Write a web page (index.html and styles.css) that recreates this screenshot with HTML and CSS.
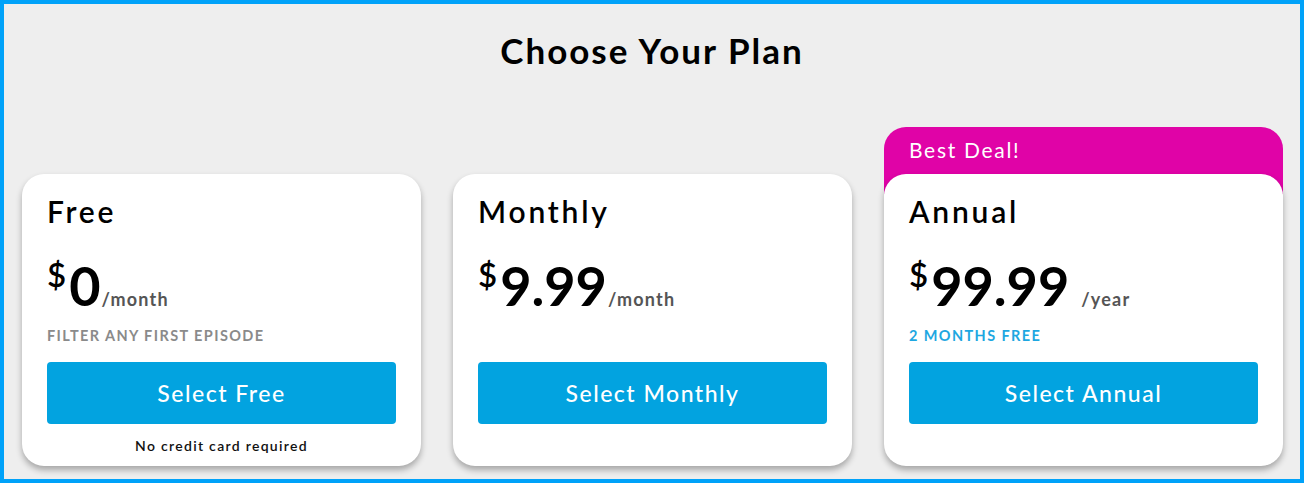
FILE: index.html
```html
<!DOCTYPE html>
<html lang="en">
<head>
<meta charset="utf-8">
<title>Choose Your Plan</title>
<link rel="stylesheet" href="styles.css">
</head>
<body>
<div class="frame">
  <h1 class="title">Choose Your Plan</h1>
  <div class="plans">
    <div class="plan">
      <div class="card">
        <h2 class="name">Free</h2>
        <div class="price"><span class="cur">$</span><span class="amt">0</span><span class="per">/month</span></div>
        <div class="sub">Filter any first episode</div>
        <button class="btn">Select Free</button>
        <div class="note">No credit card required</div>
      </div>
    </div>
    <div class="plan">
      <div class="card">
        <h2 class="name">Monthly</h2>
        <div class="price"><span class="cur">$</span><span class="amt">9.99</span><span class="per">/month</span></div>
        <div class="sub"></div>
        <button class="btn">Select Monthly</button>
        <div class="note"></div>
      </div>
    </div>
    <div class="plan">
      <div class="badge">Best Deal!</div>
      <div class="card">
        <h2 class="name">Annual</h2>
        <div class="price"><span class="cur">$</span><span class="amt">99.99</span><span class="per per-gap">/year</span></div>
        <div class="sub sub-blue">2 months free</div>
        <button class="btn">Select Annual</button>
        <div class="note"></div>
      </div>
    </div>
  </div>
</div>
</body>
</html>
```
FILE: styles.css
```css
* { box-sizing: border-box; }
html, body { margin: 0; padding: 0; }
body {
  font-family: "Lato", "Open Sans", sans-serif;
  color: #000;
}
.frame {
  width: 1304px;
  height: 483px;
  border: 4px solid #00a2f9;
  background: #eeeeee;
  display: flex;
  flex-direction: column;
  overflow: hidden;
}
.title {
  margin: 26px 0 0;
  font-size: 35px;
  line-height: 40px;
  font-weight: 700;
  text-align: center;
  letter-spacing: 2px;
}
.plans {
  margin-top: 57px;
  display: flex;
  align-items: flex-end;
  gap: 32px;
  padding: 0 17px 0 18px;
}
.plan {
  flex: 1;
  display: flex;
  flex-direction: column;
}
.badge {
  height: 67px;
  margin-bottom: -20px;
  background: #e003a7;
  color: #fff;
  border-radius: 22px 22px 0 0;
  padding: 8px 25px 0;
  font-size: 21px;
  line-height: 30px;
  letter-spacing: 1.7px;
}
.card {
  position: relative;
  background: #fff;
  border-radius: 22px;
  box-shadow: 0 4px 6px rgba(0, 0, 0, 0.3);
  padding: 19px 25px 11px;
  display: flex;
  flex-direction: column;
}
.name {
  margin: 0;
  font-size: 30px;
  line-height: 36px;
  font-weight: 600;
  letter-spacing: 2.8px;
}
.price {
  display: flex;
  align-items: baseline;
  height: 91px;
  padding-top: 30px;
}
.cur {
  align-self: flex-start;
  font-size: 33px;
  line-height: 32px;
  margin-top: -1px;
  margin-right: 3px;
  font-weight: 600;
}
.amt {
  font-size: 54px;
  line-height: 54px;
  font-weight: 700;
}
.per {
  font-size: 18px;
  font-weight: 700;
  color: #555;
  letter-spacing: 1.2px;
  margin-left: 1px;
}
.per-gap { margin-left: 12px; }
.sub {
  height: 20px;
  margin-top: 6px;
  font-size: 14.5px;
  line-height: 20px;
  font-weight: 700;
  text-transform: uppercase;
  letter-spacing: 1.4px;
  color: #8a8a8a;
}
.sub-blue { color: #1ea7e1; }
.btn {
  margin-top: 16px;
  height: 62px;
  border: 0;
  border-radius: 4px;
  background: #02a3e0;
  color: #fff;
  font-family: inherit;
  font-size: 23px;
  font-weight: 500;
  letter-spacing: 1.5px;
}
.note {
  height: 20px;
  margin-top: 11px;
  padding-top: 1px;
  font-size: 14px;
  line-height: 20px;
  font-weight: 600;
  text-align: center;
  letter-spacing: 1.3px;
  color: #111;
}
```
